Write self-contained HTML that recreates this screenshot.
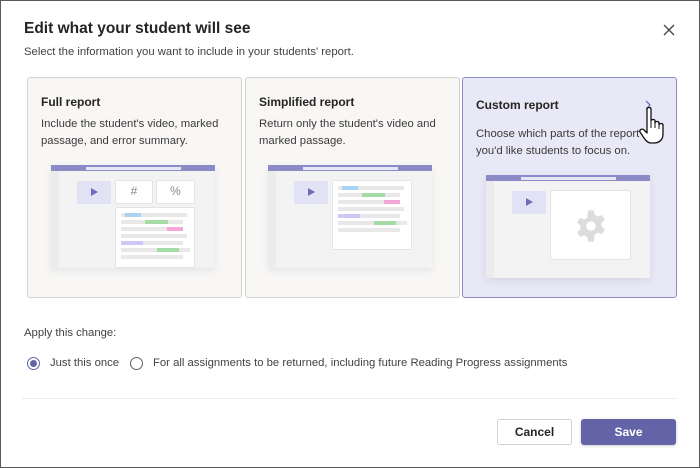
<!DOCTYPE html>
<html><head><style>
*{box-sizing:border-box;margin:0;padding:0}
body{width:700px;height:468px;background:#fff;font-family:"Liberation Sans",sans-serif;color:#252423;position:relative;overflow:hidden}
.frame{position:absolute;left:0;top:0;width:700px;height:468px;border:1px solid #5a5a5a}
.abs{position:absolute}
h1{position:absolute;left:24px;top:20px;font-size:15.5px;font-weight:bold;color:#242424}
.sub{left:24px;top:46px;font-size:11.3px;color:#424242}
.card{position:absolute;top:77px;width:215px;height:221px;background:#f8f7f6;border:1px solid #d4d2d0;border-radius:3px}
.card .t{position:absolute;left:13px;top:17px;font-size:12px;font-weight:bold}
.card .d{position:absolute;left:13px;top:38px;font-size:11.3px;line-height:17px;color:#3b3a39;width:195px}
.win{position:absolute;width:164px;height:103px;background:#f3f3f3;box-shadow:0 3px 8px rgba(0,0,0,.08)}
.win .hd{position:absolute;left:0;top:0;width:100%;height:6px;background:#8b8cc7}
.win .hd i{position:absolute;left:35px;top:1.5px;width:95px;height:3px;background:#e6e6f5}
.win .sb{position:absolute;left:0;top:6px;width:8px;bottom:0;background:#ebebeb}
.play{position:absolute;width:34px;height:23px;background:#e2e2f6}
.play:after{content:"";position:absolute;left:14px;top:7px;border-left:7px solid #6e6fb5;border-top:4.5px solid transparent;border-bottom:4.5px solid transparent}
.box{position:absolute;background:#fff;border:1px solid #e4e4e4;border-radius:2px;font-size:12px;color:#888;text-align:center;line-height:21px}
.ln{position:absolute;height:4px;background:#e8e8e8}
.radio{position:absolute;width:13px;height:13px;border-radius:50%;border:1px solid #616161}
.btn{position:absolute;top:419px;height:26px;border-radius:3px;font-size:12px;font-weight:bold;text-align:center;line-height:25px}
.lbl{font-size:11.3px;color:#424242}
</style></head><body>
<div class="frame"></div>
<h1>Edit what your student will see</h1>
<div class="abs sub">Select the information you want to include in your students' report.</div>
<svg class="abs" style="left:663px;top:24px" width="12" height="12" viewBox="0 0 12 12"><path d="M1 1L11 11M11 1L1 11" stroke="#444" stroke-width="1.3"/></svg>

<div class="card" style="left:27px">
 <div class="t">Full report</div>
 <div class="d">Include the student's video, marked passage, and error summary.</div>
 <div class="win" style="left:23px;top:87px">
  <div class="hd"><i></i></div><div class="sb"></div>
  <div class="play" style="left:26px;top:16px"></div>
  <div class="box" style="left:64px;top:15px;width:38px;height:24px">#</div>
  <div class="box" style="left:105px;top:15px;width:39px;height:24px">%</div>
  <div class="box" style="left:64px;top:42px;width:80px;height:61px">
   <div class="ln" style="left:5px;top:5px;width:66px"></div><div class="ln" style="left:9px;top:5px;width:16px;background:#a9d3f2"></div>
   <div class="ln" style="left:5px;top:12px;width:62px"></div><div class="ln" style="left:29px;top:12px;width:23px;background:#a5dca5"></div>
   <div class="ln" style="left:5px;top:19px;width:62px"></div><div class="ln" style="left:51px;top:19px;width:16px;background:#f4a6d7"></div>
   <div class="ln" style="left:5px;top:26px;width:66px"></div>
   <div class="ln" style="left:5px;top:33px;width:62px"></div><div class="ln" style="left:5px;top:33px;width:22px;background:#cfc8f5"></div>
   <div class="ln" style="left:5px;top:40px;width:69px"></div><div class="ln" style="left:41px;top:40px;width:22px;background:#a5dca5"></div>
   <div class="ln" style="left:5px;top:47px;width:62px"></div>
  </div>
 </div>
</div>

<div class="card" style="left:245px">
 <div class="t">Simplified report</div>
 <div class="d">Return only the student's video and marked passage.</div>
 <div class="win" style="left:22px;top:87px">
  <div class="hd"><i></i></div><div class="sb"></div>
  <div class="play" style="left:26px;top:16px"></div>
  <div class="box" style="left:64px;top:15px;width:80px;height:70px">
   <div class="ln" style="left:5px;top:5px;width:66px"></div><div class="ln" style="left:9px;top:5px;width:16px;background:#a9d3f2"></div>
   <div class="ln" style="left:5px;top:12px;width:62px"></div><div class="ln" style="left:29px;top:12px;width:23px;background:#a5dca5"></div>
   <div class="ln" style="left:5px;top:19px;width:62px"></div><div class="ln" style="left:51px;top:19px;width:16px;background:#f4a6d7"></div>
   <div class="ln" style="left:5px;top:26px;width:66px"></div>
   <div class="ln" style="left:5px;top:33px;width:62px"></div><div class="ln" style="left:5px;top:33px;width:22px;background:#cfc8f5"></div>
   <div class="ln" style="left:5px;top:40px;width:69px"></div><div class="ln" style="left:41px;top:40px;width:22px;background:#a5dca5"></div>
   <div class="ln" style="left:5px;top:47px;width:62px"></div>
  </div>
 </div>
</div>

<div class="card" style="left:462px;background:#e8e8f6;border-color:#8b8cc7">
 <div class="t" style="top:20px">Custom report</div>
 <div class="d" style="top:48px;width:170px">Choose which parts of the report<br>you'd like students to focus on.</div>
 <div class="win" style="left:23px;top:97px">
  <div class="hd"><i></i></div><div class="sb"></div>
  <div class="play" style="left:26px;top:16px"></div>
  <div class="box" style="left:64px;top:15px;width:81px;height:70px">
   <svg style="position:absolute;left:23px;top:18px" width="34" height="34" viewBox="0 0 24 24"><path fill="#dcdcdc" d="M10 1h4l.6 3.1 2.2 1.3 3-1.1 2 3.4-2.4 2.1v2.4l2.4 2.1-2 3.4-3-1.1-2.2 1.3L14 23h-4l-.6-3.1-2.2-1.3-3 1.1-2-3.4 2.4-2.1V11.8L2.2 9.7l2-3.4 3 1.1 2.2-1.3z"/><circle cx="12" cy="12" r="3.3" fill="#fff"/></svg>
  </div>
 </div>
 <svg style="position:absolute;left:181px;top:22px" width="8" height="10" viewBox="0 0 8 10"><path d="M2 1l4 4-4 4" stroke="#6264a7" fill="none" stroke-width="1.2"/></svg>
 <svg style="position:absolute;left:176px;top:27px" width="30" height="40" viewBox="0 0 30 40"><path d="M8 4c0-2 4-2 4 0v12c0-2 4-2 4 0v2c0-2 4-2 4 0v2c0-2 4-2 4 0v9c0 5-3 9-9 9h-3c-3 0-5-2-7-5L1 27c-1-2 2-4 4-2l3 3z" fill="#fff" stroke="#111" stroke-width="1.3" stroke-linejoin="round"/><path d="M12 16v7M16 18v5M20 20v4" stroke="#111" stroke-width="1"/></svg>
</div>

<div class="abs lbl" style="left:24px;top:327px">Apply this change:</div>
<div class="radio" style="left:27px;top:357px;border-color:#6264a7"><div style="position:absolute;left:2px;top:2px;width:7px;height:7px;border-radius:50%;background:#6264a7"></div></div>
<div class="abs lbl" style="left:50px;top:357px">Just this once</div>
<div class="radio" style="left:130px;top:357px"></div>
<div class="abs lbl" style="left:153px;top:357px">For all assignments to be returned, including future Reading Progress assignments</div>
<div class="abs" style="left:22px;top:398px;width:655px;height:1px;background:#ebebeb"></div>
<div class="btn" style="left:497px;width:75px;background:#fff;border:1px solid #d1d1d1;color:#252423">Cancel</div>
<div class="btn" style="left:581px;width:95px;background:#6264a7;color:#fff;box-shadow:0 1px 3px rgba(0,0,0,.2);line-height:26px">Save</div>
</body></html>
